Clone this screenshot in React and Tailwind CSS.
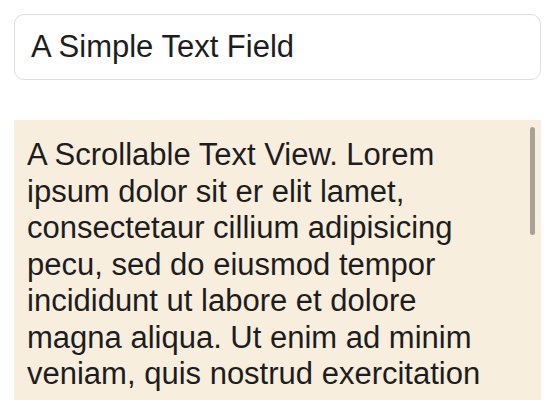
export default function App() {
    const lines = [
        "A Scrollable Text View. Lorem",
        "ipsum dolor sit er elit lamet,",
        "consectetaur cillium adipisicing",
        "pecu, sed do eiusmod tempor",
        "incididunt ut labore et dolore",
        "magna aliqua. Ut enim ad minim",
        "veniam, quis nostrud exercitation",
    ];

    return (
        <div
            className="w-[560px] h-[417px] bg-white px-[14px] pt-[14px] overflow-hidden"
            style={{ fontFamily: '"Liberation Sans", Arial, sans-serif' }}
        >
            {/* Text field */}
            <div className="w-[527px] h-[66px] rounded-[10px] border border-[#dedede] flex items-center pl-[16px] text-[31px] text-[#1d1d1d]">
                A Simple Text Field
            </div>

            {/* Scrollable text view */}
            <div className="relative mt-[40px] w-[527px] h-[280px] bg-[#f8eede] overflow-hidden pl-[13px] pt-[17px] text-[31px] leading-[36.5px] text-[#1d1d1d]">
                {lines.map((line, i) => (
                    <div key={i} className="whitespace-nowrap">
                        {line}
                    </div>
                ))}
                <div className="absolute right-[6px] top-[7px] w-[5px] h-[108px] rounded-full bg-[#a9a197]" />
            </div>
        </div>
    );
}
